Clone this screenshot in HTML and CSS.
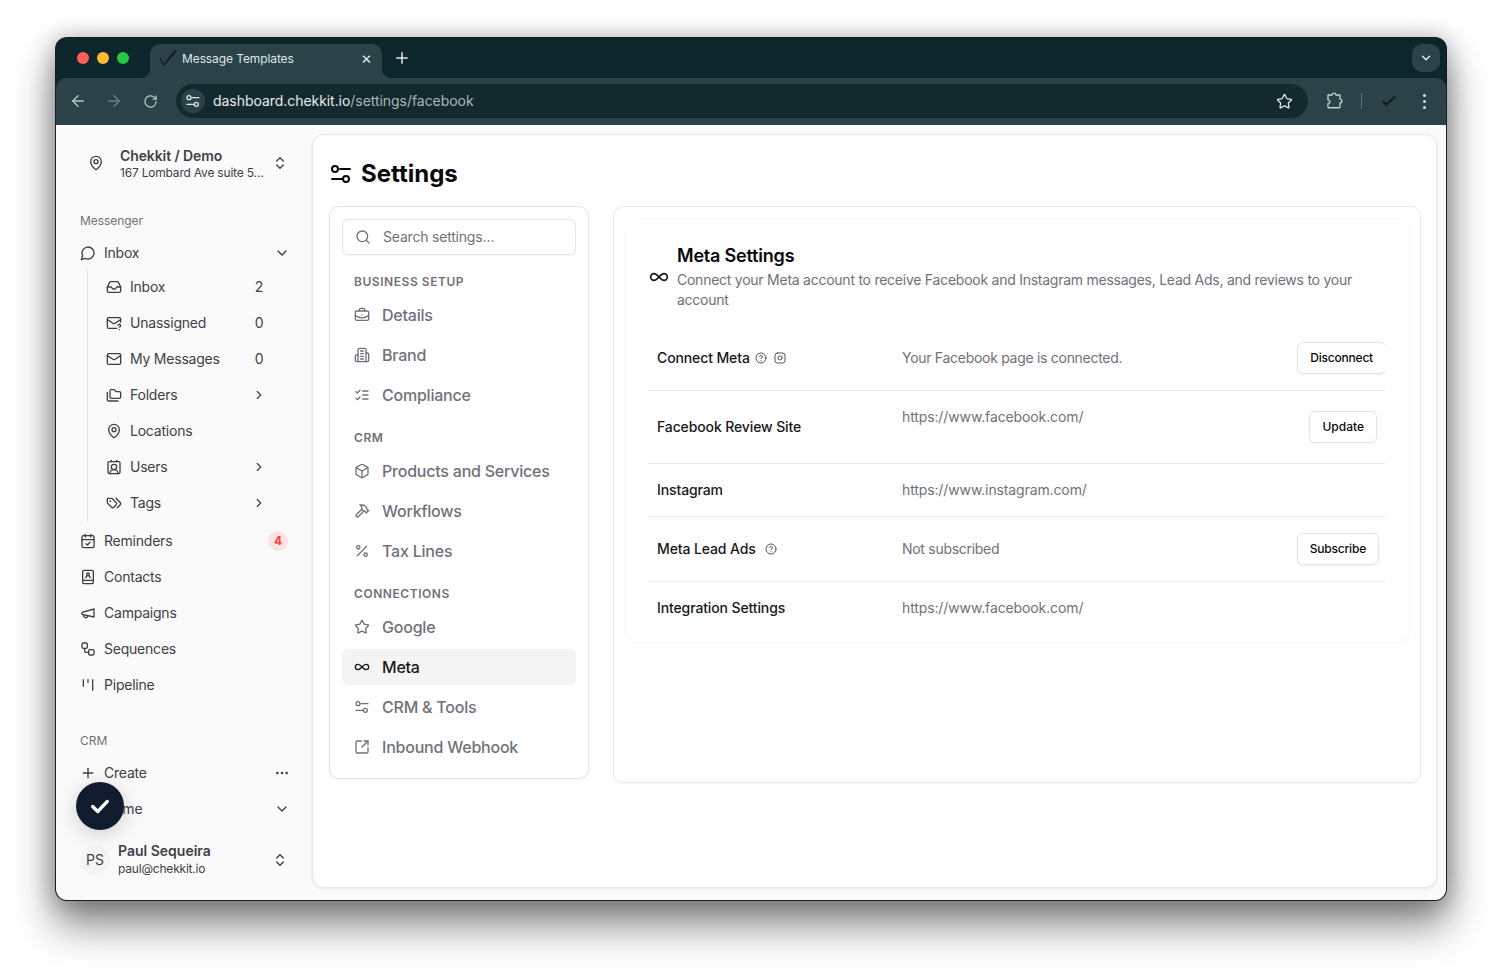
FILE: index.html
```html
<!DOCTYPE html>
<html lang="en">
<head>
<meta charset="utf-8">
<title>Message Templates</title>
<link rel="stylesheet" href="styles.css">
</head>
<body>
<svg class="sprite" xmlns="http://www.w3.org/2000/svg">
  <symbol id="i-pin" viewBox="0 0 24 24"><path d="M20 10c0 4.993-5.539 10.193-7.399 11.799a1 1 0 0 1-1.202 0C9.539 20.193 4 14.993 4 10a8 8 0 0 1 16 0"/><circle cx="12" cy="10" r="3"/></symbol>
  <symbol id="i-updown" viewBox="0 0 24 24"><path d="m7 15 5 5 5-5"/><path d="m7 9 5-5 5 5"/></symbol>
  <symbol id="i-chat" viewBox="0 0 24 24"><path d="M7.9 20A9 9 0 1 0 4 16.1L2 22Z"/></symbol>
  <symbol id="i-down" viewBox="0 0 24 24"><path d="m6 9 6 6 6-6"/></symbol>
  <symbol id="i-right" viewBox="0 0 24 24"><path d="m9 18 6-6-6-6"/></symbol>
  <symbol id="i-inbox" viewBox="0 0 24 24"><path d="M22 12h-6l-2 3h-4l-2-3H2"/><path d="M5.45 5.11 2 12v6a2 2 0 0 0 2 2h16a2 2 0 0 0 2-2v-6l-3.45-6.89A2 2 0 0 0 16.76 4H7.24a2 2 0 0 0-1.79 1.11z"/></symbol>
  <symbol id="i-mailq" viewBox="0 0 24 24"><path d="M22 10.5V6a2 2 0 0 0-2-2H4a2 2 0 0 0-2 2v12c0 1.1.9 2 2 2h12.5"/><path d="m22 7-8.97 5.7a1.94 1.94 0 0 1-2.06 0L2 7"/><path d="M18 15.28c.2-.4.5-.8.9-1a2.1 2.1 0 0 1 2.6.4c.3.4.5.8.5 1.3 0 1.3-2 2-2 2"/><path d="M20 22v.01"/></symbol>
  <symbol id="i-mail" viewBox="0 0 24 24"><rect x="2" y="4" width="20" height="16" rx="2"/><path d="m22 7-8.97 5.7a1.94 1.94 0 0 1-2.06 0L2 7"/></symbol>
  <symbol id="i-folders" viewBox="0 0 24 24"><path d="M20 17a2 2 0 0 0 2-2V9a2 2 0 0 0-2-2h-3.9a2 2 0 0 1-1.69-.9l-.81-1.2a2 2 0 0 0-1.67-.9H8a2 2 0 0 0-2 2v9a2 2 0 0 0 2 2Z"/><path d="M2 8v11a2 2 0 0 0 2 2h14"/></symbol>
  <symbol id="i-user" viewBox="0 0 24 24"><path d="M16 2v2"/><path d="M17.915 22a6 6 0 0 0-12 0"/><path d="M8 2v2"/><circle cx="12" cy="12" r="4"/><rect x="3" y="4" width="18" height="18" rx="2"/></symbol>
  <symbol id="i-tags" viewBox="0 0 24 24"><path d="m15 5 6.3 6.3a2.4 2.4 0 0 1 0 3.4L17 19"/><path d="M9.586 5.586A2 2 0 0 0 8.172 5H3a1 1 0 0 0-1 1v5.172a2 2 0 0 0 .586 1.414L8.29 18.29a2.426 2.426 0 0 0 3.42 0l3.58-3.58a2.426 2.426 0 0 0 0-3.42z"/><circle cx="6.5" cy="9.5" r=".5"/></symbol>
  <symbol id="i-cal" viewBox="0 0 24 24"><path d="M8 2v4"/><path d="M16 2v4"/><rect x="3" y="4" width="18" height="18" rx="2"/><path d="M3 10h18"/><path d="m9 16 2 2 4-4"/></symbol>
  <symbol id="i-book" viewBox="0 0 24 24"><rect x="4" y="2" width="16" height="20" rx="2"/><path d="M4 17h16"/><circle cx="12" cy="8" r="2"/><path d="M15 13a3 3 0 0 0-6 0"/></symbol>
  <symbol id="i-mega" viewBox="0 0 24 24"><path d="m3 11 18-5v12L3 14v-3z"/><path d="M11.6 16.8a3 3 0 1 1-5.8-1.6"/></symbol>
  <symbol id="i-flow" viewBox="0 0 24 24"><rect x="3" y="3" width="8" height="8" rx="2"/><path d="M7 11v4a2 2 0 0 0 2 2h4"/><rect x="13" y="13" width="8" height="8" rx="2"/></symbol>
  <symbol id="i-pipe" viewBox="0 0 24 24"><path d="M5 4v10"/><path d="M12 4v4"/><path d="M19 4v16"/></symbol>
  <symbol id="i-plus" viewBox="0 0 24 24"><path d="M5 12h14"/><path d="M12 5v14"/></symbol>
  <symbol id="i-dots" viewBox="0 0 24 24"><circle cx="5" cy="12" r="1"/><circle cx="12" cy="12" r="1"/><circle cx="19" cy="12" r="1"/></symbol>
  <symbol id="i-sliders" viewBox="0 0 24 24"><path d="M21 7h-10"/><path d="M14 17H3"/><circle cx="17" cy="17" r="3"/><circle cx="6" cy="7" r="3"/></symbol>
  <symbol id="i-search" viewBox="0 0 24 24"><circle cx="11" cy="11" r="8"/><path d="m21 21-4.3-4.3"/></symbol>
  <symbol id="i-case" viewBox="0 0 24 24"><path d="M12 12h.01"/><path d="M16 6V4a2 2 0 0 0-2-2h-4a2 2 0 0 0-2 2v2"/><path d="M22 13a18.15 18.15 0 0 1-20 0"/><rect x="2" y="6" width="20" height="14" rx="2"/></symbol>
  <symbol id="i-build" viewBox="0 0 24 24"><path d="M6 22V4a2 2 0 0 1 2-2h8a2 2 0 0 1 2 2v18Z"/><path d="M6 12H4a2 2 0 0 0-2 2v6a2 2 0 0 0 2 2h2"/><path d="M18 9h2a2 2 0 0 1 2 2v9a2 2 0 0 1-2 2h-2"/><path d="M10 6h4"/><path d="M10 10h4"/><path d="M10 14h4"/><path d="M10 18h4"/></symbol>
  <symbol id="i-checks" viewBox="0 0 24 24"><path d="m3 17 2 2 4-4"/><path d="m3 7 2 2 4-4"/><path d="M13 6h8"/><path d="M13 12h8"/><path d="M13 18h8"/></symbol>
  <symbol id="i-box" viewBox="0 0 24 24"><path d="M21 8a2 2 0 0 0-1-1.73l-7-4a2 2 0 0 0-2 0l-7 4A2 2 0 0 0 3 8v8a2 2 0 0 0 1 1.73l7 4a2 2 0 0 0 2 0l7-4A2 2 0 0 0 21 16Z"/><path d="m3.3 7 8.7 5 8.7-5"/><path d="M12 22V12"/></symbol>
  <symbol id="i-hammer" viewBox="0 0 24 24"><path d="m15 12-8.373 8.373a1 1 0 1 1-3-3L12 9"/><path d="m18 15 4-4"/><path d="m21.5 11.5-1.914-1.914A2 2 0 0 1 19 8.172V7l-2.26-2.26a6 6 0 0 0-4.202-1.756L9 2.96l.92.82A6.18 6.18 0 0 1 12 8.4V10l2 2h1.172a2 2 0 0 1 1.414.586L18.5 14.5"/></symbol>
  <symbol id="i-percent" viewBox="0 0 24 24"><path d="M19 5 5 19"/><circle cx="6.5" cy="6.5" r="2.5"/><circle cx="17.5" cy="17.5" r="2.5"/></symbol>
  <symbol id="i-star" viewBox="0 0 24 24"><path d="M11.525 2.295a.53.53 0 0 1 .95 0l2.31 4.679a2.123 2.123 0 0 0 1.595 1.16l5.166.756a.53.53 0 0 1 .294.904l-3.736 3.638a2.123 2.123 0 0 0-.611 1.878l.882 5.14a.53.53 0 0 1-.771.56l-4.618-2.428a2.122 2.122 0 0 0-1.973 0L6.396 21.01a.53.53 0 0 1-.77-.56l.881-5.139a2.122 2.122 0 0 0-.611-1.879L2.16 9.795a.53.53 0 0 1 .294-.906l5.165-.755a2.122 2.122 0 0 0 1.597-1.16z"/></symbol>
  <symbol id="i-inf" viewBox="0 0 24 24"><path d="M6 16c5 0 7-8 12-8a4 4 0 0 1 0 8c-5 0-7-8-12-8a4 4 0 1 0 0 8"/></symbol>
  <symbol id="i-ext" viewBox="0 0 24 24"><path d="M21 13v6a2 2 0 0 1-2 2H5a2 2 0 0 1-2-2V5a2 2 0 0 1 2-2h6"/><path d="m21 3-9 9"/><path d="M15 3h6v6"/></symbol>
  <symbol id="i-help" viewBox="0 0 24 24"><circle cx="12" cy="12" r="10"/><path d="M9.09 9a3 3 0 0 1 5.83 1c0 2-3 3-3 3"/><path d="M12 17h.01"/></symbol>
  <symbol id="i-insta" viewBox="0 0 24 24"><rect x="2" y="2" width="20" height="20" rx="5"/><path d="M16 11.37A4 4 0 1 1 12.63 8 4 4 0 0 1 16 11.37z"/><path d="M17.5 6.5h.01"/></symbol>
  <symbol id="i-back" viewBox="0 0 24 24"><path d="m12 19-7-7 7-7"/><path d="M19 12H5"/></symbol>
  <symbol id="i-fwd" viewBox="0 0 24 24"><path d="M5 12h14"/><path d="m12 5 7 7-7 7"/></symbol>
  <symbol id="i-reload" viewBox="0 0 24 24"><path d="M21 12a9 9 0 1 1-3-6.7L21 8"/><path d="M21 3v5h-5"/></symbol>
  <symbol id="i-puzzle" viewBox="0 0 24 24"><path d="M4 4h5.5a2.5 2.5 0 0 1 5 0H19a1 1 0 0 1 1 1v4.5a2.5 2.5 0 0 1 0 5V20a1 1 0 0 1-1 1H5a1 1 0 0 1-1-1v-4.500a2.500 2.500 0 0 0 0-5z"/></symbol>
  <symbol id="i-check" viewBox="0 0 24 24"><path d="M4 12.500 9.500 18 20 7"/></symbol>
</svg>

<div class="window">
  <header class="tabstrip">
    <div class="lights"><i class="light light-red"></i><i class="light light-yellow"></i><i class="light light-green"></i></div>
    <div class="tab">
      <svg class="favicon" viewBox="0 0 20 20"><path d="M2 10l4 7L17 2"/><path d="M6 17 18 3"/></svg>
      <span class="tab-title">Message Templates</span>
      <span class="tab-close">×</span>
    </div>
    <svg class="ico tab-new"><use href="#i-plus"/></svg>
    <div class="tab-menu"><svg class="ico"><use href="#i-down"/></svg></div>
  </header>
  <div class="toolbar">
    <svg class="ico nav-ico"><use href="#i-back"/></svg>
    <svg class="ico nav-ico nav-off"><use href="#i-fwd"/></svg>
    <svg class="ico nav-ico nav-reload"><use href="#i-reload"/></svg>
    <div class="omnibox">
      <span class="site-chip"><svg class="ico"><use href="#i-sliders"/></svg></span>
      <span class="url">dashboard.chekkit.io<span class="url-path">/settings/facebook</span></span>
      <svg class="ico omni-star"><use href="#i-star"/></svg>
    </div>
    <svg class="ico tool-puzzle"><use href="#i-puzzle"/></svg>
    <i class="tool-sep"></i>
    <svg class="tool-avatar" viewBox="0 0 20 20"><path d="M3 10l4 4 10-9"/></svg>
    <span class="tool-dots"><i></i><i></i><i></i></span>
  </div>

  <div class="app">
    <aside class="sidebar">
      <div class="org">
        <svg class="ico ico-16"><use href="#i-pin"/></svg>
        <div class="org-text">
          <div class="org-name">Chekkit / Demo</div>
          <div class="org-addr">167 Lombard Ave suite 5…</div>
        </div>
        <svg class="ico ico-16 org-toggle"><use href="#i-updown"/></svg>
      </div>

      <div class="side-label">Messenger</div>
      <a class="side-row"><svg class="ico ico-16"><use href="#i-chat"/></svg><span>Inbox</span><svg class="ico ico-16 row-end"><use href="#i-down"/></svg></a>
      <div class="sublist">
        <a class="side-row"><svg class="ico ico-16"><use href="#i-inbox"/></svg><span>Inbox</span><b class="count">2</b></a>
        <a class="side-row"><svg class="ico ico-16"><use href="#i-mailq"/></svg><span>Unassigned</span><b class="count">0</b></a>
        <a class="side-row"><svg class="ico ico-16"><use href="#i-mail"/></svg><span>My Messages</span><b class="count">0</b></a>
        <a class="side-row"><svg class="ico ico-16"><use href="#i-folders"/></svg><span>Folders</span><svg class="ico ico-14 row-end"><use href="#i-right"/></svg></a>
        <a class="side-row"><svg class="ico ico-16"><use href="#i-pin"/></svg><span>Locations</span></a>
        <a class="side-row"><svg class="ico ico-16"><use href="#i-user"/></svg><span>Users</span><svg class="ico ico-14 row-end"><use href="#i-right"/></svg></a>
        <a class="side-row"><svg class="ico ico-16"><use href="#i-tags"/></svg><span>Tags</span><svg class="ico ico-14 row-end"><use href="#i-right"/></svg></a>
      </div>
      <a class="side-row"><svg class="ico ico-16"><use href="#i-cal"/></svg><span>Reminders</span><b class="badge">4</b></a>
      <a class="side-row"><svg class="ico ico-16"><use href="#i-book"/></svg><span>Contacts</span></a>
      <a class="side-row"><svg class="ico ico-16"><use href="#i-mega"/></svg><span>Campaigns</span></a>
      <a class="side-row"><svg class="ico ico-16"><use href="#i-flow"/></svg><span>Sequences</span></a>
      <a class="side-row"><svg class="ico ico-16"><use href="#i-pipe"/></svg><span>Pipeline</span></a>

      <div class="side-label side-label-crm">CRM</div>
      <a class="side-row"><svg class="ico ico-16"><use href="#i-plus"/></svg><span>Create</span><svg class="ico ico-16 row-end"><use href="#i-dots"/></svg></a>
      <a class="side-row"><svg class="ico ico-16"><use href="#i-flow"/></svg><span>Home</span><svg class="ico ico-16 row-end"><use href="#i-down"/></svg></a>

      <div class="profile">
        <span class="avatar">PS</span>
        <div class="profile-text">
          <div class="profile-name">Paul Sequeira</div>
          <div class="profile-mail">paul@chekkit.io</div>
        </div>
        <svg class="ico ico-16 org-toggle"><use href="#i-updown"/></svg>
      </div>

      <button class="fab" type="button"><svg class="ico"><use href="#i-check"/></svg></button>
    </aside>

    <main class="main">
      <h1 class="page-title"><svg class="ico"><use href="#i-sliders"/></svg><span>Settings</span></h1>
      <div class="columns">
        <nav class="setnav">
          <div class="search"><svg class="ico ico-16"><use href="#i-search"/></svg><span>Search settings…</span></div>
          <div class="setnav-head">BUSINESS SETUP</div>
          <a class="setnav-item"><svg class="ico ico-16"><use href="#i-case"/></svg>Details</a>
          <a class="setnav-item"><svg class="ico ico-16"><use href="#i-build"/></svg>Brand</a>
          <a class="setnav-item"><svg class="ico ico-16"><use href="#i-checks"/></svg>Compliance</a>
          <div class="setnav-head">CRM</div>
          <a class="setnav-item"><svg class="ico ico-16"><use href="#i-box"/></svg>Products and Services</a>
          <a class="setnav-item"><svg class="ico ico-16"><use href="#i-hammer"/></svg>Workflows</a>
          <a class="setnav-item"><svg class="ico ico-16"><use href="#i-percent"/></svg>Tax Lines</a>
          <div class="setnav-head">CONNECTIONS</div>
          <a class="setnav-item"><svg class="ico ico-16"><use href="#i-star"/></svg>Google</a>
          <a class="setnav-item is-active"><svg class="ico ico-16"><use href="#i-inf"/></svg>Meta</a>
          <a class="setnav-item"><svg class="ico ico-16"><use href="#i-sliders"/></svg>CRM &amp; Tools</a>
          <a class="setnav-item"><svg class="ico ico-16"><use href="#i-ext"/></svg>Inbound Webhook</a>
        </nav>

        <section class="detail">
          <div class="panel">
            <div class="panel-head">
              <svg class="ico panel-ico"><use href="#i-inf"/></svg>
              <div>
                <h2 class="panel-title">Meta Settings</h2>
                <p class="panel-desc">Connect your Meta account to receive Facebook and Instagram messages, Lead Ads, and reviews to your account</p>
              </div>
            </div>
            <div class="rows">
              <div class="row">
                <div class="row-label">Connect Meta <svg class="ico ico-12 hint"><use href="#i-help"/></svg><svg class="ico ico-12 hint"><use href="#i-insta"/></svg></div>
                <div class="row-value">Your Facebook page is connected.</div>
                <button class="btn btn-disconnect" type="button">Disconnect</button>
              </div>
              <div class="row row-tall">
                <div class="row-label">Facebook Review Site</div>
                <div class="row-value row-url row-value-top">https://www.facebook.com/</div>
                <button class="btn btn-update" type="button">Update</button>
              </div>
              <div class="row">
                <div class="row-label">Instagram</div>
                <div class="row-value row-url">https://www.instagram.com/</div>
              </div>
              <div class="row">
                <div class="row-label">Meta Lead Ads <svg class="ico ico-12 hint hint-wide"><use href="#i-help"/></svg></div>
                <div class="row-value">Not subscribed</div>
                <button class="btn btn-subscribe" type="button">Subscribe</button>
              </div>
              <div class="row">
                <div class="row-label">Integration Settings</div>
                <div class="row-value row-url">https://www.facebook.com/</div>
              </div>
            </div>
          </div>
        </section>
      </div>
    </main>
  </div>
</div>
</body>
</html>
```
FILE: styles.css
```css
* { box-sizing: border-box; }
html, body { margin: 0; height: 100%; }
body {
  background: #fff;
  font-family: Inter, "Liberation Sans", sans-serif;
  color: #3f3f46;
  overflow: hidden;
  padding: 38px 56px 0;
}
.sprite { display: none; }
.ico {
  width: 24px;
  height: 24px;
  flex: none;
  fill: none;
  stroke: currentColor;
  stroke-width: 2;
  stroke-linecap: round;
  stroke-linejoin: round;
}
.ico-16 { width: 16px; height: 16px; }
.ico-14 { width: 14px; height: 14px; }
.ico-12 { width: 12px; height: 12px; }

.window {
  width: 1390px;
  height: 862px;
  border-radius: 11px;
  overflow: hidden;
  background: #0c262b;
  display: flex;
  flex-direction: column;
  box-shadow: 0 0 0 1px #1c1c1c, 0 24px 40px 2px rgba(0, 0, 0, .46), 0 2px 22px 4px rgba(0, 0, 0, .22);
}

/* Browser chrome */
.tabstrip {
  height: 40px;
  flex: none;
  background: #0c262b;
  display: flex;
  align-items: flex-end;
  color: #dfe6e7;
}
.lights {
  width: 94px;
  height: 40px;
  padding: 14px 0 0 21px;
  display: flex;
  gap: 8px;
}
.light { width: 12px; height: 12px; border-radius: 50%; }
.light-red { background: #ff5f57; }
.light-yellow { background: #febc2e; }
.light-green { background: #28c840; }
.tab {
  width: 232px;
  height: 34px;
  background: #2b4248;
  border-radius: 10px 10px 0 0;
  display: flex;
  align-items: center;
  padding: 0 10px 6px 8px;
  position: relative;
}
.tab::before, .tab::after {
  content: "";
  position: absolute;
  bottom: 0;
  width: 10px;
  height: 10px;
}
.tab::before { left: -10px; background: radial-gradient(circle at 0 0, #0c262b 10px, #2b4248 10.5px); }
.tab::after { right: -10px; background: radial-gradient(circle at 100% 0, #0c262b 10px, #2b4248 10.5px); }
.favicon { width: 20px; height: 20px; fill: none; stroke: #111f24; stroke-width: 1.2; flex: none; }
.tab-title { margin-left: 4px; font-size: 12px; flex: 1; color: #dfe6e7; letter-spacing: -.1px; }
.tab-close { font-size: 17px; line-height: 17px; color: #dfe6e7; }
.tab-new { width: 18px; height: 18px; margin: 0 0 11px 11px; }
.tab-menu {
  width: 28px;
  height: 28px;
  margin: 0 6px 6px auto;
  border-radius: 10px;
  background: #2b4248;
  display: flex;
  align-items: center;
  justify-content: center;
}
.tab-menu .ico { width: 14px; height: 14px; stroke-width: 2.5; }
.toolbar {
  height: 47px;
  flex: none;
  background: #2b4248;
  border-radius: 10px 10px 0 0;
  display: flex;
  align-items: center;
  padding: 0 0 1px 13px;
  color: #b9c6c9;
}
.nav-ico { width: 18px; height: 18px; margin-right: 18px; stroke-width: 1.8; }
.nav-off { color: #6c7f84; }
.nav-reload { width: 15px; height: 15px; margin: 0 19.5px 0 1.5px; stroke-width: 2; }
.omnibox {
  width: 1132px;
  height: 34px;
  margin-left: -1px;
  background: #13292e;
  border-radius: 17px;
  display: flex;
  align-items: center;
  padding-left: 5px;
}
.site-chip {
  width: 24px;
  height: 24px;
  border-radius: 50%;
  background: #2b4248;
  display: flex;
  align-items: center;
  justify-content: center;
  color: #dfe6e7;
}
.site-chip .ico { width: 16px; height: 16px; }
.url { margin: 0 0 2px 8px; font-size: 14px; color: #e6ecec; flex: 1; letter-spacing: -.05px; }
.url-path { color: #a9b7ba; }
.omni-star { width: 17px; height: 17px; margin-right: 15px; color: #dfe6e7; stroke-width: 1.8; }
.tool-puzzle { width: 18px; height: 18px; margin-left: 17px; color: #c5d1d3; stroke-width: 1.8; }
.tool-sep { width: 1px; height: 16px; margin-left: 18px; background: #5c7076; }
.tool-avatar { width: 18px; height: 18px; margin-left: 18px; fill: none; stroke: #1b1b1b; stroke-width: 2.6; }
.tool-dots { margin-left: 25px; display: flex; flex-direction: column; gap: 3px; }
.tool-dots i { width: 3px; height: 3px; border-radius: 50%; background: #d3dcde; display: block; }

/* App */
.app { flex: 1; min-height: 0; display: flex; background: #fafafa; }
.sidebar {
  width: 256px;
  flex: none;
  padding: 20px 23px 0 24px;
  position: relative;
  font-size: 14px;
  letter-spacing: -.22px;
}
.org { height: 36px; display: flex; align-items: center; gap: 16px; padding-left: 8px; }
.org-text { flex: 1; min-width: 0; padding-top: 2px; }
.org-name { font-weight: 600; font-size: 14px; line-height: 17px; color: #3f3f46; letter-spacing: -.1px; }
.org-addr { font-size: 12px; line-height: 17px; white-space: nowrap; letter-spacing: -.2px; }
.org-toggle { margin-right: 1px; }
.side-label { margin-top: 32px; margin-bottom: 6px; height: 16px; line-height: 16px; font-size: 12px; color: #71717a; letter-spacing: -.05px; }
.side-label-crm { margin-top: 30px; }
.side-row { height: 36px; display: flex; align-items: center; gap: 8px; }
.side-row span, .count { margin-bottom: 2px; }
.row-end { margin-left: auto; margin-right: -1px; }
.sublist {
  margin: -2px 0 2px 7px;
  padding-left: 18px;
  border-left: 1px solid #e4e4e7;
  width: 180px;
}
.sublist .row-end { margin-right: 1px; }
.count { margin-left: auto; margin-right: 1px; font-weight: 400; }
.sublist .count { margin-right: 1px; width: 10px; transform: translateX(-2px); text-align: center; }
.badge {
  margin-left: auto;
  width: 20px;
  height: 20px;
  margin-right: 1px;
  border-radius: 50%;
  background: #fee2e2;
  color: #ef4444;
  font-size: 12px;
  font-weight: 700;
  text-align: center;
  line-height: 20px;
}
.profile { margin-top: 18px; height: 30px; display: flex; align-items: center; gap: 8px; }
.avatar {
  width: 30px;
  height: 30px;
  border-radius: 50%;
  background: #f4f4f5;
  font-size: 14px;
  line-height: 30px;
  text-align: center;
  flex: none;
  letter-spacing: 0;
}
.profile-text { flex: 1; min-width: 0; }
.profile-name { font-weight: 600; font-size: 14px; line-height: 18px; letter-spacing: 0; }
.profile-mail { font-size: 12px; line-height: 18px; letter-spacing: -.2px; }
.fab {
  position: absolute;
  left: 20px;
  top: 657px;
  width: 48px;
  height: 48px;
  border: 0;
  padding: 0;
  border-radius: 50%;
  background: #111c2e;
  color: #fff;
  display: flex;
  align-items: center;
  justify-content: center;
  box-shadow: 0 4px 20px rgba(0, 0, 0, .18);
}
.fab .ico { width: 22px; height: 22px; stroke-width: 3.6; }

/* Main */
.main {
  width: 1125px;
  height: 754px;
  margin-top: 9px;
  background: #fff;
  border: 1px solid #e8e8ea;
  border-radius: 12px;
  padding: 23px 16px 0;
  box-shadow: 0 1px 3px rgba(0, 0, 0, .08);
}
.page-title {
  margin: 0 0 16px;
  height: 32px;
  display: flex;
  align-items: center;
  gap: 8px;
  font-size: 24px;
  font-weight: 700;
  color: #09090b;
}
.page-title span { margin-bottom: 2px; }
.columns { display: grid; grid-template-columns: 260px 808px; column-gap: 24px; align-items: start; }
.setnav {
  background: #fff;
  border: 1px solid #e4e4e7;
  border-radius: 10px;
  padding: 12px 12px 13px;
  box-shadow: 0 1px 2px rgba(0, 0, 0, .05);
}
.search {
  height: 36px;
  border: 1px solid #e4e4e7;
  border-radius: 6px;
  display: flex;
  align-items: center;
  gap: 12px;
  padding-left: 12px;
  font-size: 14px;
  color: #71717a;
  box-shadow: 0 1px 2px rgba(0, 0, 0, .04);
}
.search span { margin-bottom: 2px; letter-spacing: -.2px; }
.setnav-head {
  margin: 16px 0 8px;
  padding-left: 12px;
  height: 16px;
  line-height: 18px;
  font-size: 12px;
  font-weight: 600;
  letter-spacing: .55px;
  color: #71717a;
}
.search + .setnav-head { margin-top: 18px; }
.setnav-item {
  height: 36px;
  margin-bottom: 4px;
  padding-left: 12px;
  border-radius: 6px;
  display: flex;
  align-items: center;
  gap: 12px;
  font-size: 16px;
  font-weight: 500;
  color: #71717a;
  letter-spacing: -.22px;
}
.setnav-item:last-child { margin-bottom: 0; }
.is-active { background: #f4f4f5; color: #18181b; }
.detail {
  min-height: 577px;
  background: #fff;
  border: 1px solid #e8e8ea;
  border-radius: 10px;
  padding: 11px 10px;
  box-shadow: 0 1px 2px rgba(0, 0, 0, .04);
}
.panel {
  border: 1px solid #f8f8f9;
  border-radius: 12px;
  padding: 23px 24px 8px 23px;
  background: #fefefe;
}
.panel-head { display: flex; align-items: center; gap: 8px; padding-left: 1px; margin-bottom: 16px; }
.panel-ico { width: 20px; height: 20px; color: #18181b; margin-top: 2px; }
.panel-title { margin: 0; font-size: 18px; line-height: 28px; font-weight: 600; color: #09090b; letter-spacing: -.2px; }
.panel-desc { margin: 0; font-size: 14px; line-height: 20px; color: #71717a; letter-spacing: -.25px; }
.rows { overflow: hidden; }
.row {
  display: grid;
  grid-template-columns: 245px 1fr auto;
  align-items: center;
  padding: 16px 0 16px 9px;
  border-bottom: 1px solid #e8e8ea;
  font-size: 14px;
  min-height: 53px;
}
.row:last-child { border-bottom: 0; min-height: 52px; }
.row-tall { padding-top: 20px; padding-bottom: 20px; }
.row-label { font-weight: 500; color: #18181b; line-height: 20px; display: flex; align-items: center; white-space: pre; letter-spacing: -.12px; }
.row-value { color: #71717a; line-height: 20px; letter-spacing: -.29px; }
.row-url { letter-spacing: -.12px; }
.row-value-top { align-self: start; margin-top: -4px; }
.hint { margin-left: 2px; margin-right: 5px; stroke-width: 1.8; color: #3f3f46; }
.hint-wide { margin-left: 6px; }
.btn {
  height: 32px;
  padding: 0 12px;
  background: #fff;
  border: 1px solid #e4e4e7;
  border-radius: 6px;
  font: 500 12px/30px Inter, "Liberation Sans", sans-serif;
  color: #09090b;
  box-shadow: 0 1px 2px rgba(0, 0, 0, .05);
}
.btn-disconnect { margin-right: -1px; letter-spacing: -.2px; }
.btn-update { margin-right: 8px; }
.btn-subscribe { margin-right: 6px; letter-spacing: -.2px; }
```
